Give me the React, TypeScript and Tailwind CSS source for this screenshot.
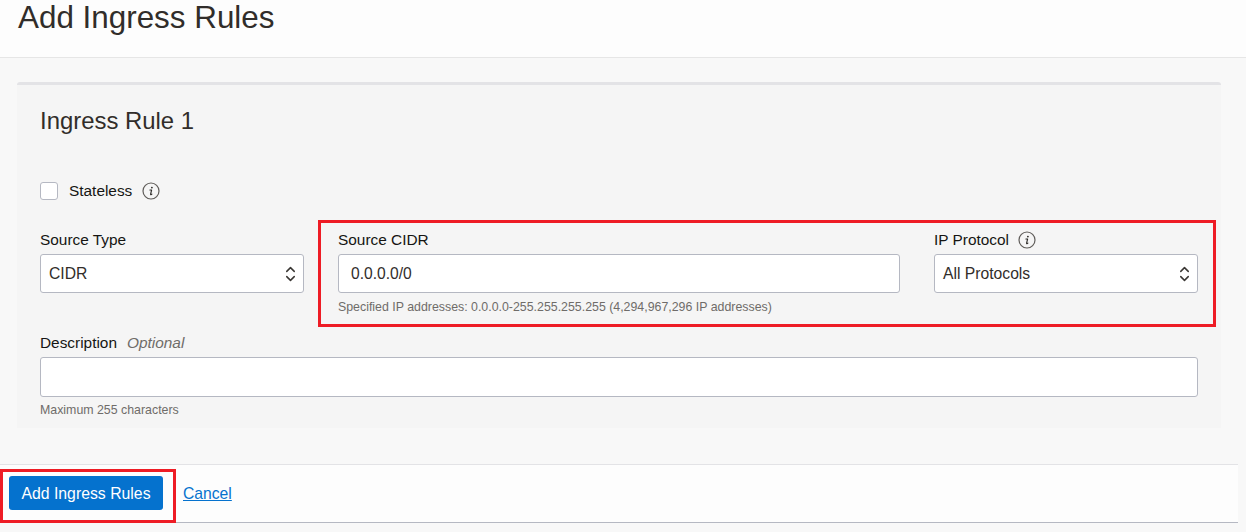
import React from 'react';
import { ChevronUp, ChevronDown } from 'lucide-react';

function InfoIcon() {
  return (
    <svg width="18" height="18" viewBox="0 0 18 18" fill="none" className="shrink-0">
      <circle cx="9" cy="9" r="8" stroke="#5f5c59" strokeWidth="1.2" />
      <circle cx="9.9" cy="5.6" r="0.9" fill="#2b2926" />
      <path d="M7.9 8h1.7l-1 4.2c-.1.5.3.6.6.4l.7-.5" stroke="#2b2926" strokeWidth="1.1" strokeLinecap="round" strokeLinejoin="round" />
    </svg>
  );
}

function SelectBox({ value, className }: { value: string; className: string }) {
  return (
    <div className={`flex h-[39px] items-center justify-between rounded-[3px] border border-[#b5b8c2] bg-white pl-2 pr-[5px] text-[15.7px] text-[#312d2a] ${className}`}>
      <span>{value}</span>
      <span className="flex flex-col items-center text-[#3a3734]">
        <ChevronUp size={15} strokeWidth={2.4} className="-mb-[3px]" />
        <ChevronDown size={15} strokeWidth={2.4} className="-mt-[3px]" />
      </span>
    </div>
  );
}

export default function App() {
  return (
    <div className="flex h-[532px] w-[1246px] flex-col overflow-hidden bg-[#f8f8f8] font-['Liberation_Sans',Arial,sans-serif] text-[#161513]">
      <header className="h-[58px] shrink-0 border-b border-[#e6e6e6] bg-[#fdfdfd] pl-[18px]">
        <h1 className="text-[31.4px] leading-[36px] text-[#312d2a]">Add Ingress Rules</h1>
      </header>

      <main className="px-[17px] pt-[24px]">
        <section className="h-[346px] w-[1204px] rounded-t-[3px] border-t-[3px] border-[#e3e3e6] bg-[#f5f5f5] px-[23px]">
          <h2 className="pt-[22px] text-[23.9px] leading-[28px] text-[#312d2a]">Ingress Rule 1</h2>

          <div className="mt-[46px] flex h-[20px] items-center">
            <span className="h-[18px] w-[18px] rounded-[3px] border border-[#b5b8c2] bg-white" />
            <span className="ml-[11px] text-[15.4px]">Stateless</span>
            <span className="ml-[10px]"><InfoIcon /></span>
          </div>

          <div className="mt-[19px] -mr-[18px] flex items-start">
            <div className="w-[264px] pt-[10px]">
              <label className="block text-[15.4px] leading-[20px]">Source Type</label>
              <SelectBox value="CIDR" className="mt-[4px] w-full" />
            </div>
            <div className="ml-[14px] flex h-[107px] w-[898px] border-[3px] border-[#ee1c25] pl-[17px] pt-[7px]">
              <div className="w-[562px]">
                <label className="block text-[15.4px] leading-[20px]">Source CIDR</label>
                <div className="mt-[4px] flex h-[39px] items-center rounded-[3px] border border-[#b5b8c2] bg-white pl-3 text-[15.6px] text-[#312d2a]">0.0.0.0/0</div>
                <p className="mt-[6px] text-[12.37px] leading-[16px] text-[#6f6c69]">Specified IP addresses: 0.0.0.0-255.255.255.255 (4,294,967,296 IP addresses)</p>
              </div>
              <div className="ml-[34px] w-[264px]">
                <div className="flex h-[20px] items-center">
                  <label className="text-[15.4px] leading-[20px]">IP Protocol</label>
                  <span className="ml-[9px]"><InfoIcon /></span>
                </div>
                <SelectBox value="All Protocols" className="mt-[4px] w-full" />
              </div>
            </div>
          </div>

          <div className="mt-[6px]">
            <label className="block text-[15.4px] leading-[20px]">
              Description<em className="ml-[10px] text-[#6f6c69]">Optional</em>
            </label>
            <div className="mt-[4px] h-[40px] rounded-[3px] border border-[#b5b8c2] bg-white" />
            <p className="mt-[5px] text-[12.37px] leading-[16px] text-[#6f6c69]">Maximum 255 characters</p>
          </div>
        </section>
      </main>

      <footer className="mt-[36px] h-[59px] w-[1238px] shrink-0 border-b border-t border-b-[#b5b8c2] border-t-[#e3e3e6] bg-[#fdfdfd]">
        <div className="mt-[4px] flex items-center">
          <div className="h-[54px] w-[176px] border-[3px] border-[#ee1c25] pl-[6px] pt-[4px]">
            <button className="h-[34px] w-[154px] rounded-[3px] bg-[#0572ce] pt-px text-[15.8px] text-white">Add Ingress Rules</button>
          </div>
          <a className="ml-[7px] -mt-[4px] text-[15.7px] text-[#0572ce] underline">Cancel</a>
        </div>
      </footer>
    </div>
  );
}
